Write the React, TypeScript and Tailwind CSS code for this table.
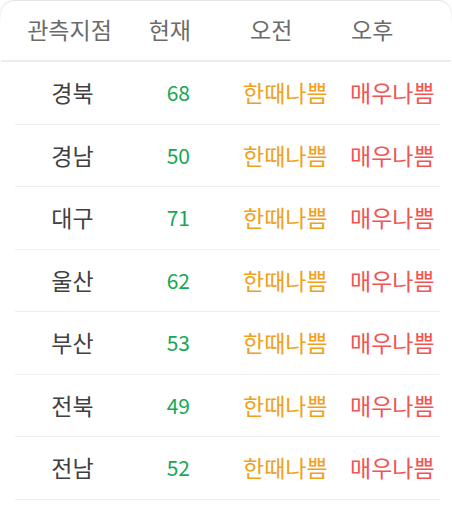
import React from "react";

const rows = [
  ["경북", "68"],
  ["경남", "50"],
  ["대구", "71"],
  ["울산", "62"],
  ["부산", "53"],
  ["전북", "49"],
  ["전남", "52"],
];

export default function App() {
  return (
    <div
      className="w-[452px] h-[508px] bg-white overflow-hidden"
      style={{ fontFamily: '"Noto Sans CJK KR", "Noto Sans", sans-serif' }}
    >
      <div className="w-[452px] rounded-t-[14px] p-px pb-0 bg-linear-to-b from-[#e4e4e4] to-white to-[40%]">
        <div className="bg-white rounded-t-[13px] flex items-center h-[61px] border-b-2 border-[#ececec] text-[23px] text-[#6b6b6b] leading-none pb-[2px]">
          <div className="w-[137px] text-center">관측지점</div>
          <div className="w-[53px] text-right">현재</div>
          <div className="w-[160px] pl-[59px]">오전</div>
          <div className="flex-1">오후</div>
        </div>
      </div>
      <div className="px-[15px] w-[455px]">
        {rows.map(([name, v]) => (
          <div
            key={name}
            className="flex items-center h-[62.5px] border-b border-[#eeeeee] text-[23px] leading-none"
          >
            <div className="w-[115px] text-center text-[#404040]">{name}</div>
            <div className="w-[60px] text-right text-[#16a853] text-[21px]">{v}</div>
            <div className="w-[160px] pl-[53px] text-[#f0a11a]">한때나쁨</div>
            <div className="flex-1 text-[#f25454]">매우나쁨</div>
          </div>
        ))}
      </div>
    </div>
  );
}
